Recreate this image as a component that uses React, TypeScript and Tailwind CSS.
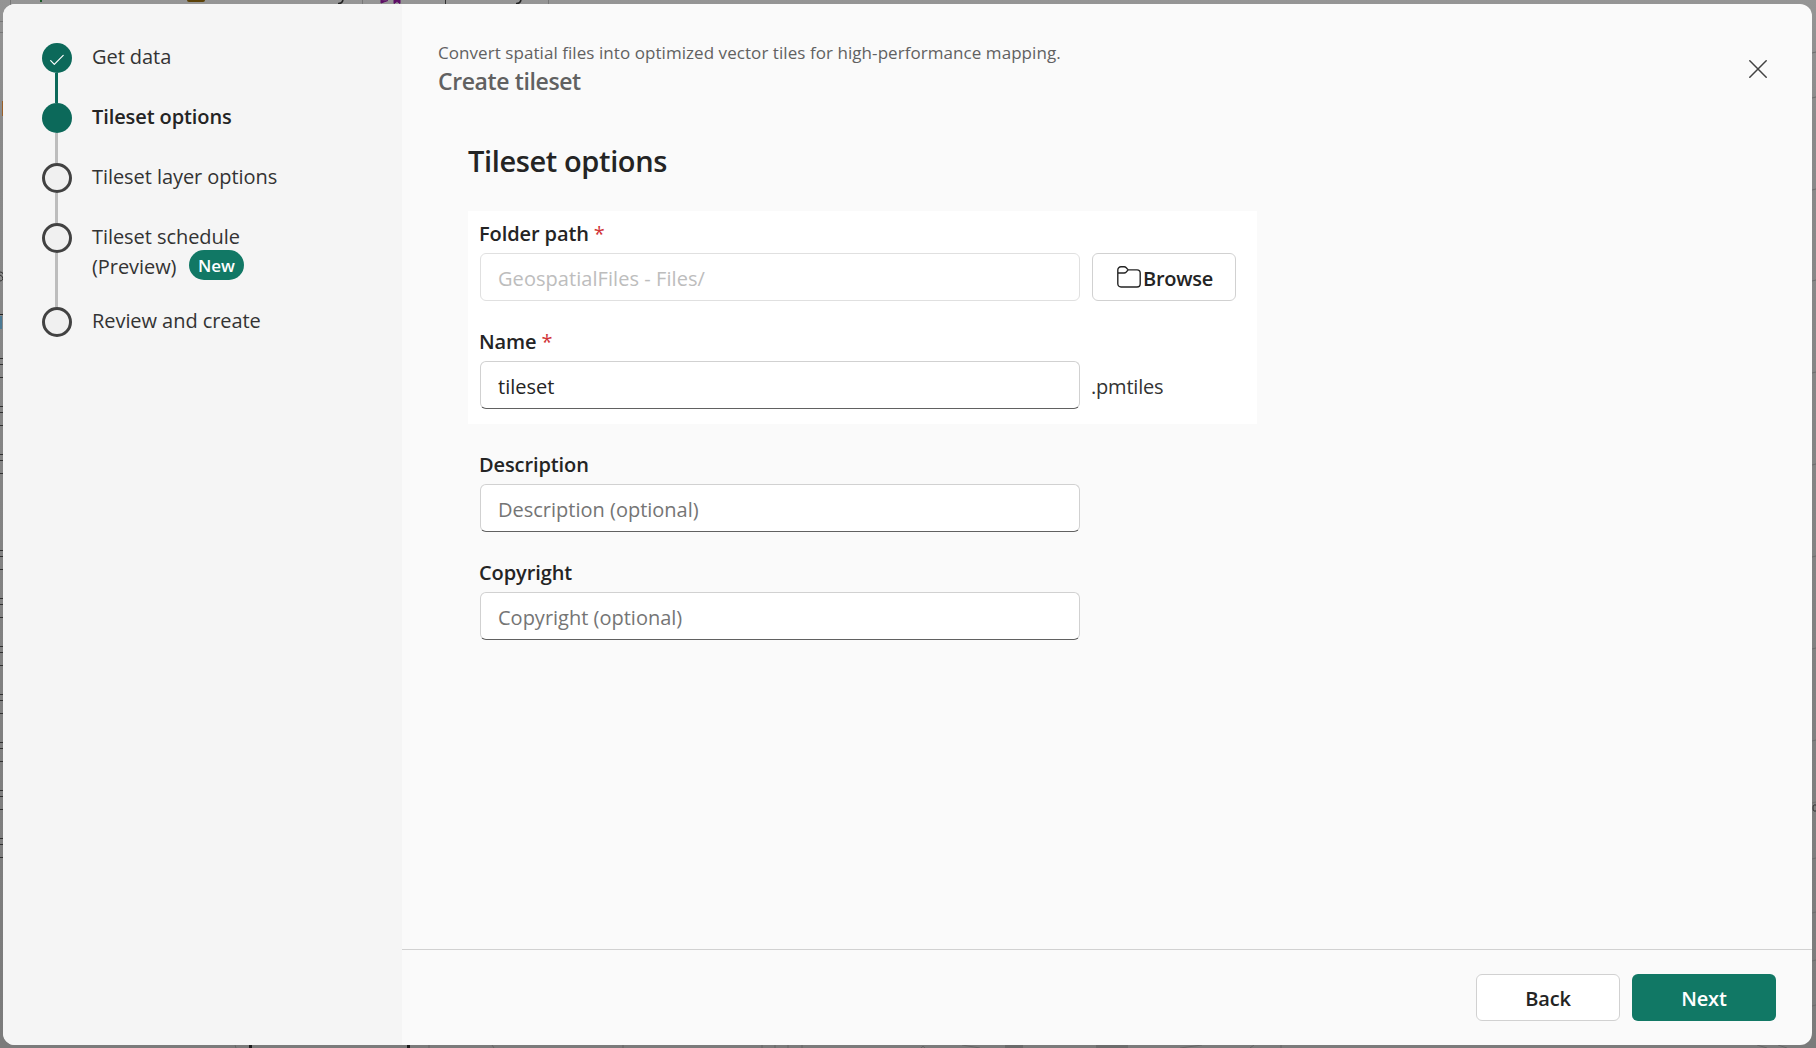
// src/components/tileset/CreateTilesetDialog.tsx
import { useState } from 'react';
import type { ReactNode } from 'react';

type StepState = 'done' | 'current' | 'pending';

interface Step {
  label: ReactNode;
  state: StepState;
  height: string;
}

const steps: Step[] = [
  { label: 'Get data', state: 'done', height: 'h-[60px]' },
  {
    label: <span className="font-semibold tracking-[-0.1px] text-[#242424]">Tileset options</span>,
    state: 'current',
    height: 'h-[60px]'
  },
  { label: 'Tileset layer options', state: 'pending', height: 'h-[60px]' },
  {
    label: (
      <>
        <span className="block">Tileset schedule</span>
        <span className="flex">
          (Preview)
          <span className="-mt-0.5 ml-[13px] flex h-[30px] w-[55px] items-center justify-center rounded-full bg-[#117865] pt-px pr-px text-[17px] font-semibold text-white">
            New
          </span>
        </span>
      </>
    ),
    state: 'pending',
    height: 'h-[84px]'
  },
  { label: 'Review and create', state: 'pending', height: 'h-[30px]' }
];

// Row positions of the list items that peek out on the left of the dialog
const listRows = [358, 406, 454, 550, 598, 646, 694, 742, 790, 838];

function Backdrop() {
  return (
    <svg className="absolute inset-0" width="1816" height="1048" viewBox="0 0 1816 1048" aria-hidden="true">
      <defs>
        <linearGradient id="shade" x1="0" y1="0" x2="0" y2="1">
          <stop offset="0" stopColor="#959595" />
          <stop offset="0.12" stopColor="#8a8a8a" />
          <stop offset="1" stopColor="#7b7b7b" />
        </linearGradient>
      </defs>
      <rect width="1816" height="1048" fill="url(#shade)" />
      <rect x="10" width="1" height="20" fill="#777" />
      <rect x="40" width="2" height="2" fill="#1c5a28" />
      <rect x="187" y="-4" width="18" height="6" rx="2" fill="#5c4208" />
      <path d="M343 0q-1 4-5 3.500M521 0q-1 4-5 3.500" fill="none" stroke="#222" strokeWidth="1.500" />
      <rect x="362" width="1" height="4" fill="#777" />
      <rect x="548" width="1" height="4" fill="#777" />
      <path d="M381 0v3l7-2.500M394 0v3.500l3-2 3 2V0z" fill="#5e0f66" stroke="#5e0f66" />
      <rect x="445" width="1" height="4" fill="#333" />
      <rect x="0" y="21" width="3" height="1" fill="#777" />
      <rect x="0" y="32" width="3" height="1" fill="#777" />
      <rect x="2" y="101" width="2" height="15" fill="#9a5f28" />
      <path d="M0 272q3 0 3 2M0 275q3 1 3 4-1 2-3 2" fill="none" stroke="#333" />
      <rect x="0" y="314" width="3" height="1" fill="#222" />
      <rect x="0" y="316" width="2" height="13" fill="#4c7a94" />
      {listRows.map((y) => (
        <path key={y} d={`M0 ${y}.5h3m-3 6h3m-3 13h3`} stroke="#303030" />
      ))}
      {[52, 97, 189, 280, 372, 464, 556, 648, 740, 802, 858, 912, 960, 1005].map((y) => (
        <path key={y} d={`M1812 ${y + 1}l4-1`} stroke="#6d6d6d" />
      ))}
      <path d="M1816 805h-2q-1 0-1 3t1 3h2" fill="none" stroke="#333" />
      <rect x="249" y="1045" width="3" height="3" fill="#1c1c1c" />
      <rect x="407" y="1045" width="3" height="3" fill="#1c1c1c" />
      <path
        d="M235 1045l1 3M429 1045v3M492 1045l2 3M623 1045v3M762 1045v3M775 1045v3M788 1045v3M802 1045v3M921 1048l2-2 2 2M962 1045l18 3M1180 1048l22-3M1250 1048l4-3M1281 1045v3M1757 1045l10 3M1778 1045l9 3"
        stroke="#666"
        fill="none"
      />
      <rect x="1005" y="1045" width="18" height="3" fill="#6a6a6a" />
      <rect x="1096" y="1045" width="32" height="3" fill="#6c6c6c" />
    </svg>
  );
}

function StepMarker({ state }: { state: StepState }) {
  if (state === 'pending') {
    return <span className="size-[30px] shrink-0 rounded-full border-[3px] border-[#424242] bg-[#f0f0f0]" />;
  }

  return (
    <span className="flex size-[30px] shrink-0 items-center justify-center rounded-full bg-[#0c695a]">
      {state === 'done' && (
        <svg className="mt-1" width="14" height="12" viewBox="0 0 14 12" fill="none" stroke="#fff" strokeWidth="1.200">
          <path d="M0.700 6.700 4.300 10.300 13.200 1.400" strokeLinecap="round" strokeLinejoin="round" />
        </svg>
      )}
    </span>
  );
}

function FolderIcon() {
  return (
    <svg width="24" height="22" viewBox="0 0 24 22" fill="none" stroke="#242424" strokeWidth="1.400">
      <path
        d="M0.800 7V4A3.200 3.200 0 0 1 4 0.800H7.200Q8.300 0.800 9 1.500L11.200 3.900H20A3.200 3.200 0 0 1 23.200 7.100V17.800A3.200 3.200 0 0 1 20 21H4A3.200 3.200 0 0 1 0.800 17.800V7H7.200Q8.300 7 9 6.300L11.200 3.900"
        strokeLinejoin="round"
      />
    </svg>
  );
}

interface FieldProps {
  label: string;
  value: string;
  placeholder?: string;
  required?: boolean;
  disabled?: boolean;
  onChange?: (value: string) => void;
  children?: ReactNode;
}

function Field({ label, value, placeholder, required, disabled, onChange, children }: FieldProps) {
  return (
    <div>
      <label className="-ml-px mb-1 block pt-px leading-[30px] font-semibold tracking-[-0.1px] text-[#242424]">
        {label}
        {required && <span className="ml-[5px] font-normal text-[#d13438]">*</span>}
      </label>
      <div className="flex items-center gap-3">
        <input
          type="text"
          value={value}
          placeholder={placeholder}
          disabled={disabled}
          onChange={(e) => onChange?.(e.target.value)}
          className={`h-12 w-[600px] rounded-md border bg-white px-[17px] pt-0.5 outline-none placeholder:text-[#757575] ${
            disabled
              ? 'border-[#e0e0e0] tracking-[0.06px] text-[#bdbdbd]'
              : 'border-[#d1d1d1] border-b-[#616161] text-[#242424]'
          }`}
        />
        {children}
      </div>
    </div>
  );
}

export default function App() {
  const [name, setName] = useState('tileset');
  const [description, setDescription] = useState('');
  const [copyright, setCopyright] = useState('');

  return (
    <div className="relative h-[1048px] w-[1816px] overflow-hidden px-[3px] pt-1 font-['Open_Sans','Noto_Sans',sans-serif] text-[20px]">
      <Backdrop />
      <div className="relative flex h-[1041px] w-[1809px] overflow-hidden rounded-xl bg-[#fafafa]">
        {/* Steps */}
        <aside className="w-[399px] bg-[#f5f5f5] pt-[39px] pl-[39px]">
          {steps.map((step, index) => (
            <div key={index} className={`flex gap-5 ${step.height}`}>
              <div className="flex flex-col">
                <StepMarker state={step.state} />
                {index < steps.length - 1 && (
                  <span className={`ml-[13px] w-[3px] flex-1 ${step.state === 'done' ? 'bg-[#0c695a]' : 'bg-[#bdbdbd]'}`} />
                )}
              </div>
              <div className="-mt-px leading-[30px] tracking-[-0.06px] text-[#333333]">{step.label}</div>
            </div>
          ))}
        </aside>

        <main className="flex flex-1 flex-col">
          <header className="flex h-[124px] justify-between pt-9 pr-[45px] pl-9 text-[#616161]">
            <div>
              <p className="text-[17px] leading-[26px] tracking-[0.06px]">
                Convert spatial files into optimized vector tiles for high-performance mapping.
              </p>
              <h1 className="-mt-px text-[23px] leading-8 font-semibold tracking-[-0.38px]">Create tileset</h1>
            </div>
            <button type="button" className="mt-5 size-[18px]" title="Close">
              <svg width="18" height="18" viewBox="0 0 18 18" stroke="#424242" strokeWidth="1.500" strokeLinecap="round">
                <path d="M0.800 0.800 17.200 17.200M17.200 0.800 0.800 17.200" />
              </svg>
            </button>
          </header>

          <section className="flex-1 pl-[66px]">
            <h2 className="h-[83px] pt-3 text-[29px] leading-[42px] font-semibold tracking-[-0.38px] text-[#242424]">
              Tileset options
            </h2>
            <div className="flex h-[213px] w-[789px] flex-col gap-[25px] bg-white px-3 pt-[7px]">
              <Field label="Folder path" value="GeospatialFiles - Files/" required disabled>
                <button
                  type="button"
                  className="flex h-12 w-36 items-center justify-center gap-0.5 rounded-md border border-[#d1d1d1] bg-white pl-0.5 font-semibold tracking-[-0.25px] text-[#242424]"
                >
                  <FolderIcon />
                  <span className="pt-[3px]">Browse</span>
                </button>
              </Field>
              <Field label="Name" value={name} onChange={setName} required>
                <span className="-ml-px pt-[3px] tracking-[-0.2px] text-[#333333]">.pmtiles</span>
              </Field>
            </div>
            <div className="flex flex-col gap-[25px] px-3 pt-[25px]">
              <Field
                label="Description"
                value={description}
                placeholder="Description (optional)"
                onChange={setDescription}
              />
              <Field label="Copyright" value={copyright} placeholder="Copyright (optional)" onChange={setCopyright} />
            </div>
          </section>

          <footer className="flex justify-end gap-3 border-t border-[#d1d1d1] py-6 pr-9 font-semibold tracking-[-0.2px]">
            <button
              type="button"
              className="h-[47px] w-36 rounded-md border border-[#d1d1d1] bg-white pt-[3px] text-[#242424]"
            >
              Back
            </button>
            <button type="button" className="h-[47px] w-36 rounded-md bg-[#117865] pt-[3px] text-white">
              Next
            </button>
          </footer>
        </main>
      </div>
    </div>
  );
}
